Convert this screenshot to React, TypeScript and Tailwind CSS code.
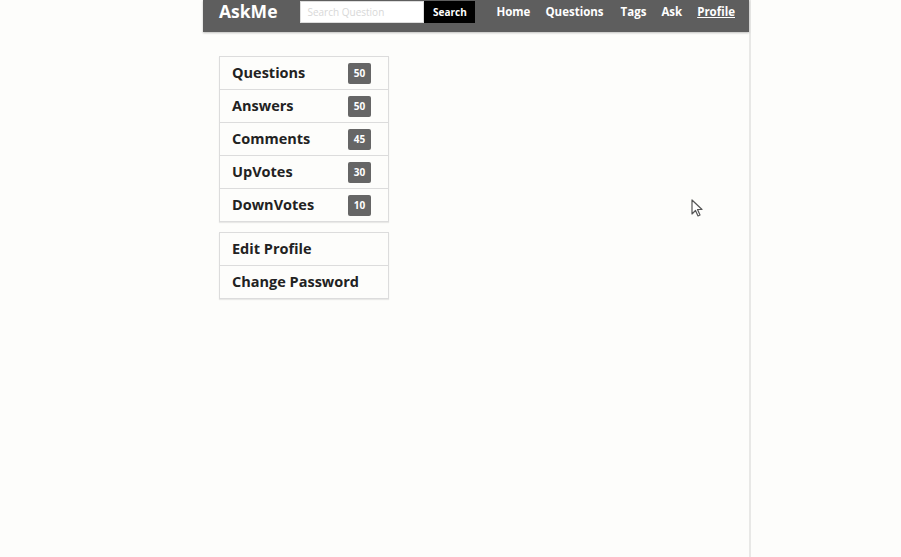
import React from "react";

const stats = [
  { label: "Questions", value: 50 },
  { label: "Answers", value: 50 },
  { label: "Comments", value: 45 },
  { label: "UpVotes", value: 30 },
  { label: "DownVotes", value: 10 },
];

const links = ["Edit Profile", "Change Password"];

export default function App() {
  return (
    <div
      className="relative flex min-h-[557px] bg-[#fdfdfb] text-[#222]"
      style={{ fontFamily: '"Open Sans", "Noto Sans", sans-serif' }}
    >
      <div className="w-[203px] shrink-0" />
      <div className="w-[548px] shrink-0 border-r-2 border-[#e8e8e6] min-h-[557px]">
        <header className="h-[32px] bg-[#5e5e5e] pl-4 pr-[14px] pt-[1px] shadow-[0_1px_2px_rgba(0,0,0,0.25)]">
          <div className="flex h-[22px] items-center">
            <div className="text-[17.5px] font-bold leading-none text-white">AskMe</div>
            <div className="ml-[23px] flex h-[22px] items-stretch">
              <div className="flex w-[124px] items-center border border-[#ddd] bg-white px-[6px] text-[10px] text-[#d8d8d8]">
                Search Question
              </div>
              <div className="flex w-[51px] items-center justify-center bg-black text-[10px] font-bold text-white">
                Search
              </div>
            </div>
            <nav className="ml-auto flex items-center gap-[15px] text-[11.5px] font-bold text-white">
              <span>Home</span>
              <span>Questions</span>
              <span className="ml-[2px]">Tags</span>
              <span>Ask</span>
              <span className="underline">Profile</span>
            </nav>
          </div>
        </header>
        <div className="pl-4 pt-[24px]">
          <div className="w-[170px] border border-[#dcdcdc] shadow-[0_1px_1px_rgba(0,0,0,0.08)]">
            {stats.map((s, i) => (
              <div
                key={s.label}
                className={`flex items-center justify-between pl-[12px] pr-[17px] ${i > 0 ? "h-[33px] border-t border-[#dcdcdc]" : "h-[32px]"}`}
              >
                <span className="text-[14.5px] font-bold">{s.label}</span>
                <span className="flex h-[21px] w-[23px] items-center justify-center rounded-[2px] bg-[#666] text-[10px] font-bold text-white">
                  {s.value}
                </span>
              </div>
            ))}
          </div>
          <div className="mt-[10px] w-[170px] border border-[#dcdcdc] shadow-[0_1px_1px_rgba(0,0,0,0.08)]">
            {links.map((l, i) => (
              <div
                key={l}
                className={`flex items-center pl-[12px] ${i > 0 ? "h-[33px] border-t border-[#dcdcdc]" : "h-[32px]"}`}
              >
                <span className="text-[14.5px] font-bold">{l}</span>
              </div>
            ))}
          </div>
        </div>
      </div>
      <svg
        className="absolute left-[691px] top-[199px]"
        width="14"
        height="20"
        viewBox="0 0 14 20"
      >
        <path d="M1 1 L1 15 L4.5 11.5 L7 17 L9 16 L6.5 10.5 L11 10.5 Z" fill="white" stroke="#555" strokeWidth="1.2" strokeLinejoin="round" />
      </svg>
    </div>
  );
}
